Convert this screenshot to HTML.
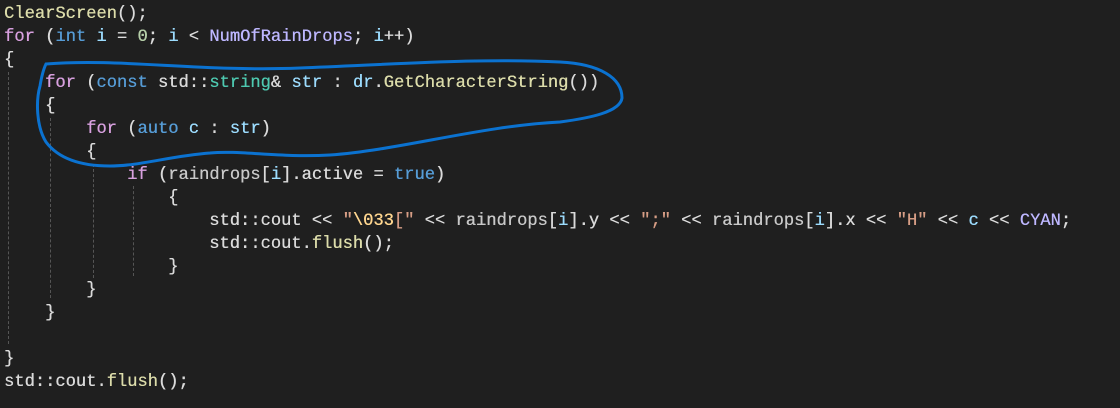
<!DOCTYPE html><html><head><style>
body{margin:0;width:1120px;height:408px;background:#1f1f1f;overflow:hidden;position:relative}
pre{margin:0;position:absolute;left:4px;top:3px;font-family:"Liberation Mono",monospace;font-size:17.1px;line-height:23px;color:#dadada;text-shadow:0.3px 0 0 currentColor}
.k{color:#d8a0df}.t{color:#569cd6}.v{color:#9cdcfe}.m{color:#beb7ff}.f{color:#dcdcaa}.s{color:#4ec9b0}.n{color:#b5cea8}.q{color:#d69d85}.e{color:#ffd68f}.g{color:#c8c8c8}
.gd{position:absolute;border-left:1px dashed #555;width:0}
</style></head><body>
<div class="gd" style="left:8px;top:72px;height:272px"></div>
<div class="gd" style="left:50px;top:118px;height:180px"></div>
<div class="gd" style="left:93px;top:164px;height:114px"></div>
<div class="gd" style="left:133px;top:186px;height:90px"></div>
<pre><span class="f">ClearScreen</span>();
<span class="k">for</span> (<span class="t">int</span> <span class="v">i</span> = <span class="n">0</span>; <span class="v">i</span> &lt; <span class="m">NumOfRainDrops</span>; <span class="v">i</span>++)
{
    <span class="k">for</span> (<span class="t">const</span> std::<span class="s">string</span>&amp; <span class="v">str</span> : <span class="v">dr</span>.<span class="f">GetCharacterString</span>())
    {
        <span class="k">for</span> (<span class="t">auto</span> <span class="v">c</span> : <span class="v">str</span>)
        {
            <span class="k">if</span> (<span class="g">raindrops</span>[<span class="v">i</span>].active = <span class="t">true</span>)
                {
                    std::cout &lt;&lt; <span class="q">"<span class="e">\033</span>["</span> &lt;&lt; <span class="g">raindrops</span>[<span class="v">i</span>].y &lt;&lt; <span class="q">";"</span> &lt;&lt; <span class="g">raindrops</span>[<span class="v">i</span>].x &lt;&lt; <span class="q">"H"</span> &lt;&lt; <span class="v">c</span> &lt;&lt; <span class="m">CYAN</span>;
                    std::cout.<span class="f">flush</span>();
                }
        }
    }

}
std::cout.<span class="f">flush</span>();</pre>
<svg width="1120" height="408" style="position:absolute;left:0;top:0"><path d="M46 64 C120 58 200 72 300 68 C400 64 480 58 560 62 C600 64 622 78 622 98 C620 112 590 118 560 122 C480 126 400 150 330 155 C280 158 240 150 210 153 C170 156 140 166 110 166 C80 166 58 158 46 142 C36 126 36 100 40 86 C42 74 44 68 46 64" fill="none" stroke="#0b72d0" stroke-width="3" stroke-linecap="round"/></svg>
</body></html>
